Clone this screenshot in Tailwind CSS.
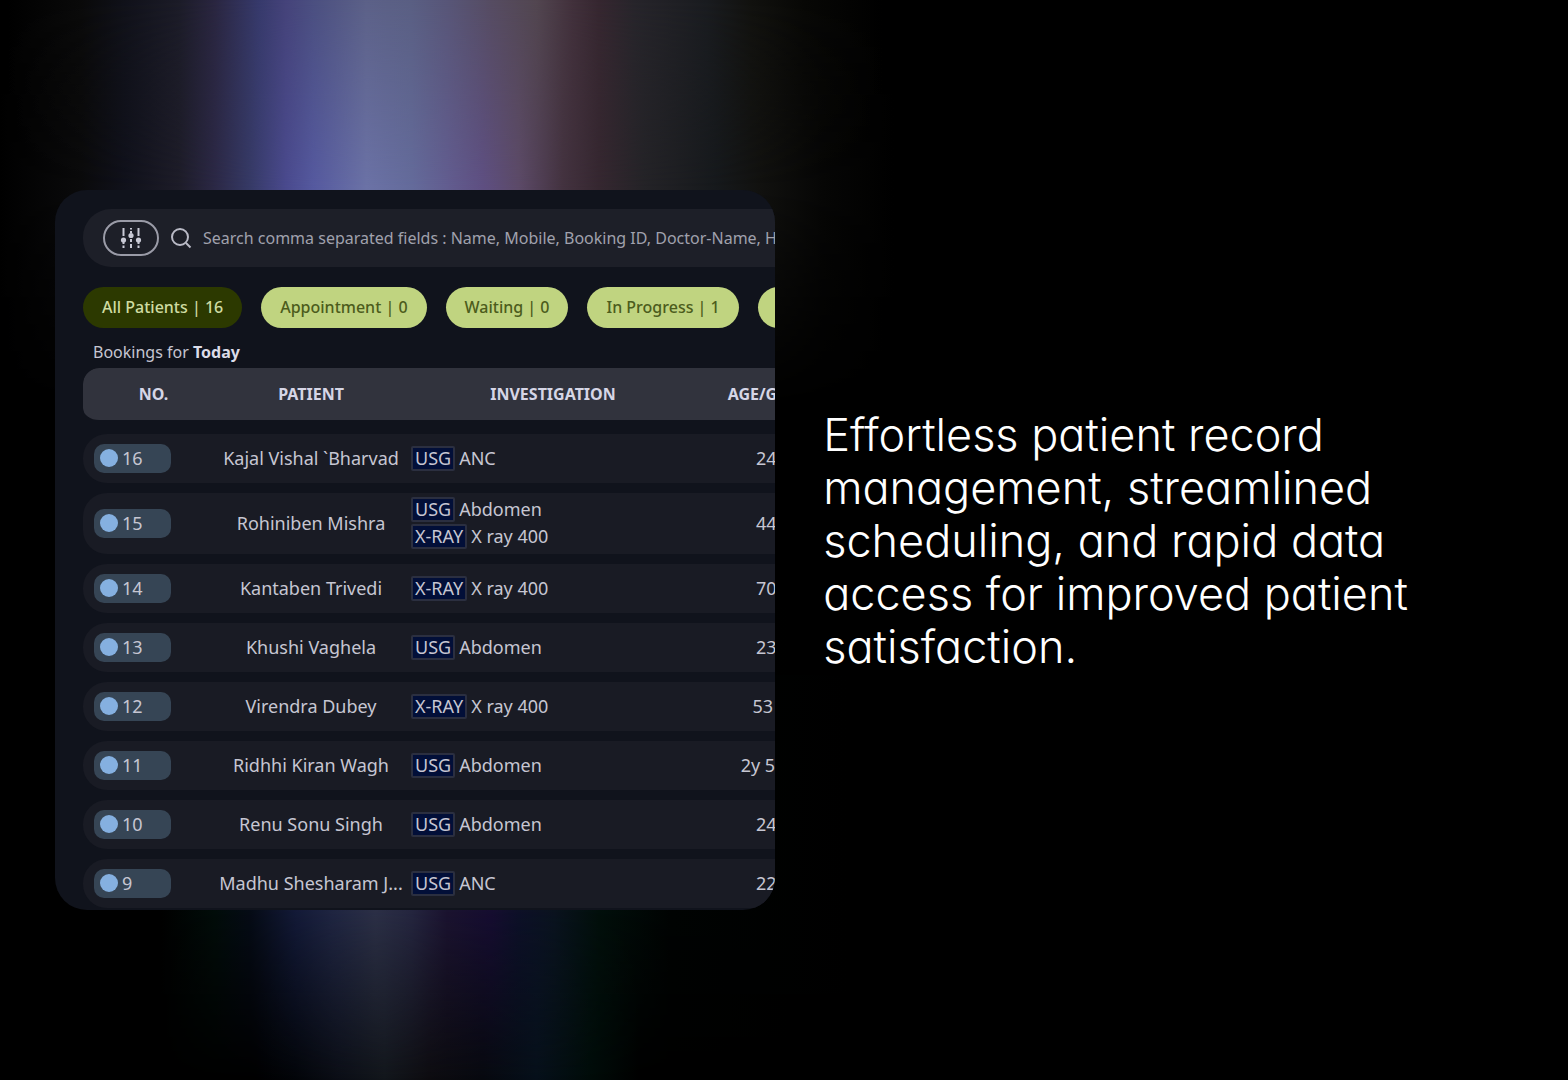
<!DOCTYPE html>
<html lang="en">
<head>
  <meta charset="UTF-8">
  <meta name="viewport" content="width=device-width, initial-scale=1.0">
  <title>Patient records</title>
  <script src="https://cdn.jsdelivr.net/npm/@tailwindcss/browser@4"></script>
</head>
<body class="bg-black font-['Noto_Sans',sans-serif] text-[#c6c6d2]">
  <main class="relative isolate flex min-h-screen items-center gap-12 overflow-hidden pl-[55px]">

    <!-- Aurora glow behind the card -->
    <div class="absolute inset-y-0 left-0 -z-10 w-[57%]" aria-hidden="true">
      <div class="absolute inset-x-0 top-0 h-1/2 mask-[linear-gradient(to_bottom,black_35%,transparent_75%)]">
        <div class="absolute inset-0 bg-[linear-gradient(to_right,#000_0%,#0a0a0a_9%,#11121a_14%,#1c1c28_20%,#2a2640_24%,#373a6c_29%,#45437a_32%,#4b4f80_35%,#5c6188_41%,#5a5f83_46%,#585678_50%,#564c62_55%,#524650_60%,#42313c_64%,#362730_67%,#27252b_71%,#1a1c20_79%,#12120f_84%,#080806_90%,#000_100%)]"></div>
        <div class="absolute inset-0 bg-[linear-gradient(to_right,#000_0%,#0a0a0b_9%,#10111b_14%,#1d1c28_20%,#2b2845_24%,#363a66_28%,#4a4a8e_32%,#55599f_35%,#6b72a6_41%,#646b9b_46%,#625d90_50%,#5e4f82_54%,#5c4a68_58%,#43323f_63%,#352730_67%,#242327_72%,#16191c_80%,#11110f_85%,#060605_92%,#000_100%)] mask-[linear-gradient(to_bottom,transparent_0%,black_35%)]"></div>
      </div>
      <div class="absolute inset-x-0 bottom-0 h-1/2">
        <div class="absolute inset-0 bg-[linear-gradient(to_right,#000_28%,#030509_33%,#0b0e16_38%,#12161b_43%,#0d0c10_48%,#07090f_54%,#06101a_60%,#010c09_66%,#000_72%)] mask-[linear-gradient(to_bottom,transparent_20%,black_70%)]"></div>
        <div class="absolute inset-0 bg-[linear-gradient(to_right,#000_18%,#010c09_24%,#050b16_28%,#131a38_33%,#1f2542_37%,#2c3047_42%,#252640_46%,#1b1330_50%,#160d31_55%,#0d1028_58%,#0a131f_62%,#010f0b_67%,#000302_75%,#000_95%)] mask-[linear-gradient(to_bottom,transparent,black_50%,black_68%,transparent_100%)]"></div>
      </div>
    </div>

    <!-- Booking list -->
    <section class="mt-5 aspect-square w-[47.6%] shrink-0 overflow-hidden rounded-[32px] bg-[#10131c] pl-7 pt-[19px]">
      <div class="w-[980px]">
        <form class="flex h-[58px] items-center rounded-[28px] bg-[#1d1f28] pl-5">
          <button type="button" aria-label="Filters" class="flex h-9 w-14 items-center justify-center rounded-full border-2 border-[#9a9ba7]">
            <svg class="size-6" viewBox="0 0 24 24" fill="none" stroke="#c9cad6" stroke-width="2">
              <path d="M4.500 2v8M4.500 16v2M4.500 19.500v2.500M12 2v1.500M12 5v2M12 13v3M12 18v4M19.500 2v8M19.500 16v2M19.500 19.500v2.500" />
              <g fill="#c9cad6" stroke="none">
                <circle cx="4.500" cy="14" r="2.600" />
                <circle cx="12" cy="9.500" r="2.600" />
                <circle cx="19.500" cy="14" r="2.600" />
              </g>
            </svg>
          </button>
          <label for="search" class="ml-2.5 flex">
            <span class="sr-only">Search bookings</span>
            <svg class="size-6" viewBox="0 0 24 24" fill="none" stroke="#b9bac6" stroke-width="2">
              <circle cx="11" cy="11" r="8" />
              <path d="M17 17l4.500 4.500" />
            </svg>
          </label>
          <input id="search" type="text" placeholder="Search comma separated fields : Name, Mobile, Booking ID, Doctor-Name, Hospital" class="ml-2.5 h-full flex-1 bg-transparent text-base outline-none placeholder:text-[#a0a1ad]">
        </form>

        <nav class="mt-5 flex gap-[19px] font-medium">
          <button type="button" class="h-[41px] rounded-full bg-[#2c3900] px-[19px] text-[#cfdca2]">All Patients | 16</button>
          <button type="button" class="h-[41px] rounded-full bg-[#c0d480] px-[19px] text-[#4c5c1c]">Appointment | 0</button>
          <button type="button" class="h-[41px] rounded-full bg-[#c0d480] px-[19px] text-[#4c5c1c]">Waiting | 0</button>
          <button type="button" class="h-[41px] rounded-full bg-[#c0d480] px-[19px] text-[#4c5c1c]">In Progress | 1</button>
          <button type="button" class="h-[41px] rounded-full bg-[#c0d480] px-[19px] text-[#4c5c1c]">Completed | 15</button>
        </nav>

        <table class="w-full table-fixed border-separate border-spacing-x-0 border-spacing-y-[10px] text-[18px]">
          <caption class="h-[30px] pl-2.5 pt-4 text-left text-base leading-4">Bookings for <b class="text-[#dcdce8]">Today</b></caption>
          <colgroup>
            <col class="w-[129px]">
            <col class="w-[198px]">
            <col class="w-[286px]">
            <col class="w-[166px]">
            <col>
          </colgroup>
          <thead class="text-base text-[#d6d6e6]">
            <tr>
              <th class="h-14 rounded-l-[16px] border-b-4 border-transparent bg-[#31333d] bg-clip-padding pl-3">NO.</th>
              <th class="border-b-4 border-transparent bg-[#31333d] bg-clip-padding">PATIENT</th>
              <th class="border-b-4 border-transparent bg-[#31333d] bg-clip-padding">INVESTIGATION</th>
              <th class="border-b-4 border-transparent bg-[#31333d] bg-clip-padding">AGE/GENDER</th>
              <th class="border-b-4 border-transparent bg-[#31333d] bg-clip-padding">STATUS</th>
            </tr>
          </thead>
          <tbody id="bookings"></tbody>
        </table>
      </div>
    </section>

    <p class="w-[600px] font-['Inter',sans-serif] text-[45px] leading-[53px] font-light text-white [font-feature-settings:'cv11']">
      Effortless patient record management, streamlined scheduling, and rapid data access for improved patient satisfaction.
    </p>
  </main>

  <script>
    const bookings = [
      { no: 16, name: 'Kajal Vishal `Bharvad', tests: [['USG', 'ANC']], age: '24 / F' },
      { no: 15, name: 'Rohiniben Mishra', tests: [['USG', 'Abdomen'], ['X-RAY', 'X ray 400']], age: '44 / F' },
      { no: 14, name: 'Kantaben Trivedi', tests: [['X-RAY', 'X ray 400']], age: '70 / F' },
      { no: 13, name: 'Khushi Vaghela', tests: [['USG', 'Abdomen']], age: '23 / F' },
      { no: 12, name: 'Virendra Dubey', tests: [['X-RAY', 'X ray 400']], age: '53 / M' },
      { no: 11, name: 'Ridhhi Kiran Wagh', tests: [['USG', 'Abdomen']], age: '2y 5m / F' },
      { no: 10, name: 'Renu Sonu Singh', tests: [['USG', 'Abdomen']], age: '24 / F' },
      { no: 9, name: 'Madhu Shesharam J...', tests: [['USG', 'ANC']], age: '22 / F' },
    ];

    const testLine = ([type, label]) => `
      <div class="flex h-[27px] items-center gap-1">
        <span class="rounded-[2px] border-2 border-[#2b2f40] bg-[#020f38] px-0.5 leading-[21px]">${type}</span>${label}
      </div>`;

    document.getElementById('bookings').innerHTML = bookings.map(b => `
      <tr>
        <td class="rounded-l-[24px] bg-[#191b24] pl-[11px] ${b.tests.length > 1 ? 'h-[61px]' : 'h-[49px]'}">
          <div class="flex h-[29px] w-[77px] items-center gap-1 rounded-[10px] bg-[#364555] pl-1.5">
            <span class="size-[18px] rounded-full bg-[#85b0e0]"></span>${b.no}
          </div>
        </td>
        <td class="truncate bg-[#191b24] px-1 text-center">${b.name}</td>
        <td class="bg-[#191b24] pl-px">${b.tests.map(testLine).join('')}</td>
        <td class="bg-[#191b24] text-center">${b.age}</td>
        <td class="bg-[#191b24]"></td>
      </tr>`).join('');
  </script>
</body>
</html>
